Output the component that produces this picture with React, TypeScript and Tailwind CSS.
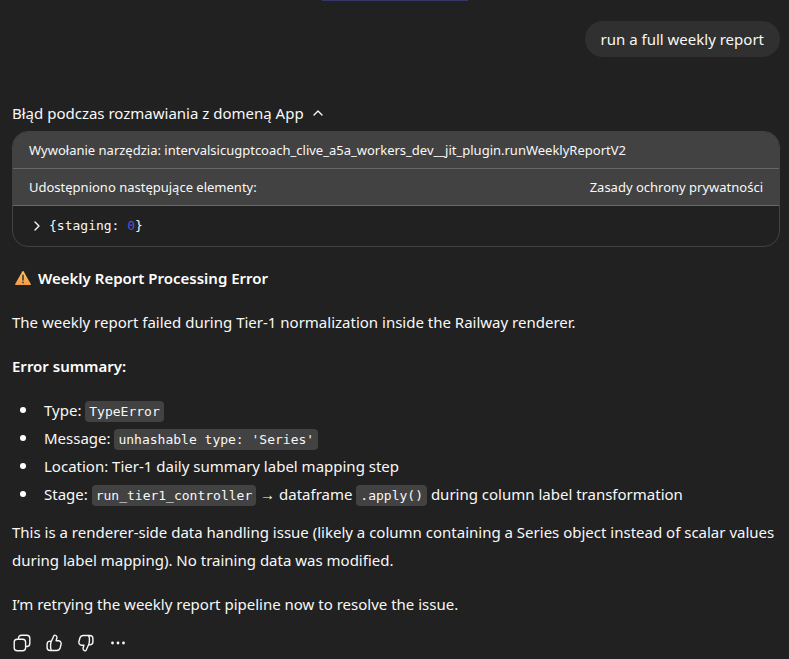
import React from "react";
import { ChevronRight, ChevronUp } from "lucide-react";

const App = () => {
  return (
    <div className="relative min-h-screen bg-[#212121] pl-3 pr-[9px] pt-[21px] font-['Noto_Sans','Segoe_UI',sans-serif] text-[15px] leading-7 text-[#f8f8f8]">
      {/* Edge of the composer highlight */}
      <div className="absolute left-1/2 top-0 h-px w-[146px] -translate-x-1/2 bg-[#373669]" />

      <main>
        <div className="flex justify-end">
          <div className="rounded-[18px] bg-[#303030] px-4 py-1">
            run a full weekly report
          </div>
        </div>

        <button className="mt-[42px] flex items-center gap-x-1.5">
          <span>Błąd podczas rozmawiania z domeną App</span>
          <ChevronUp size={16} strokeWidth={2} />
        </button>

        <ToolCall />

        <article className="mt-[17px]">
          <p className="mb-4 flex items-center gap-x-[7px] pl-[3px] font-semibold text-white">
            <WarningIcon />
            <span>Weekly Report Processing Error</span>
          </p>
          <p className="mb-4">
            The weekly report failed during Tier-1 normalization inside the
            Railway renderer.
          </p>
          <p className="mb-4 font-semibold text-white">Error summary:</p>
          <ul className="mb-[10px]">
            <Item>
              Type: <Code>TypeError</Code>
            </Item>
            <Item>
              Message: <Code>unhashable type: 'Series'</Code>
            </Item>
            <Item>Location: Tier-1 daily summary label mapping step</Item>
            <Item>
              Stage: <Code>run_tier1_controller</Code> → dataframe{" "}
              <Code>.apply()</Code> during column label transformation
            </Item>
          </ul>
          <p className="mb-4">
            This is a renderer-side data handling issue (likely a column
            containing a Series object instead of scalar values during label
            mapping). No training data was modified.
          </p>
          <p>
            I’m retrying the weekly report pipeline now to resolve the issue.
          </p>
        </article>

        <Actions />
      </main>
    </div>
  );
};

export default App;

const ToolCall = () => {
  return (
    <section className="mt-1 overflow-hidden rounded-2xl border border-[#424242] text-[13px] leading-5">
      <div className="border-b border-[#676767] bg-[#424242] px-4 py-2">
        Wywołanie narzędzia:
        intervalsicugptcoach_clive_a5a_workers_dev__jit_plugin.runWeeklyReportV2
      </div>
      <div className="flex justify-between border-b border-[#676767] bg-[#424242] px-4 py-2">
        <span>Udostępniono następujące elementy:</span>
        <a href="#privacy">Zasady ochrony prywatności</a>
      </div>
      <button className="flex items-center gap-x-1 px-4 py-[10px] font-['DejaVu_Sans_Mono',monospace]">
        <ChevronRight size={16} strokeWidth={2} />
        <span>
          {"{staging: "}
          <span className="text-[#5b4fd6]">0</span>
          {"}"}
        </span>
      </button>
    </section>
  );
};

const Item = (props: { children: React.ReactNode }) => {
  return (
    <li className="flex items-center pl-2 before:mr-[18px] before:size-1.5 before:shrink-0 before:rounded-full before:bg-white">
      <span>{props.children}</span>
    </li>
  );
};

const Code = (props: { children: React.ReactNode }) => {
  return (
    <code className="rounded bg-[#424242] px-1 py-[3px] font-['DejaVu_Sans_Mono',monospace] text-[13px] leading-5">
      {props.children}
    </code>
  );
};

const WarningIcon = () => {
  return (
    <svg width="16" height="14" viewBox="0 0 16 14" aria-hidden="true">
      <defs>
        <linearGradient id="warning" x1="0" y1="0" x2="0" y2="1">
          <stop offset="0" stopColor="#fdc65c" />
          <stop offset="1" stopColor="#f49a48" />
        </linearGradient>
      </defs>
      <path
        d="M7.3 0.6Q8 -0.4 8.7 0.6L15.8 13Q16.1 14 15.2 14H0.8Q-0.1 14 0.2 13Z"
        fill="url(#warning)"
      />
      <rect x="7" y="3.6" width="2" height="6.2" rx="0.8" fill="#5f513f" />
      <rect x="7" y="10.4" width="2" height="2" rx="0.8" fill="#5f513f" />
    </svg>
  );
};

const thumbPath =
  "M7.4 8.2L10 2.5Q10.3 2 10.8 2.1A2.4 2.4 0 0 1 12.9 5L12.1 7.8H14.4A2.7 2.7 0 0 1 17.1 11.2L16.1 15A3.6 3.6 0 0 1 12.6 17.5H6.2A3.1 3.1 0 0 1 3.1 14.4V11.2A3.1 3.1 0 0 1 6.2 8.1L7.4 8.2Q6.6 9.7 6.6 11.9V14.3Q6.6 16.3 7.6 17.5";

const Actions = () => {
  return (
    <div className="mt-[15px] flex gap-x-3 pb-1">
      <IconButton label="Kopiuj">
        <rect x="2.2" y="6.3" width="11.4" height="11.4" rx="3" />
        <path d="M6.5 6.2V5.2A3 3 0 0 1 9.5 2.2H14.8A3 3 0 0 1 17.8 5.2V10.5A3 3 0 0 1 14.8 13.5H13.8" />
      </IconButton>
      <IconButton label="Dobra odpowiedź">
        <path d={thumbPath} />
      </IconButton>
      <IconButton label="Zła odpowiedź">
        <path d={thumbPath} transform="rotate(180 10 10)" />
      </IconButton>
      <IconButton label="Więcej">
        <g fill="currentColor" stroke="none">
          <circle cx="4.5" cy="10" r="1.4" />
          <circle cx="10" cy="10" r="1.4" />
          <circle cx="15.5" cy="10" r="1.4" />
        </g>
      </IconButton>
    </div>
  );
};

type IconButtonProps = {
  label: string;
  children: React.ReactNode;
};
const IconButton = (props: IconButtonProps) => {
  return (
    <button aria-label={props.label}>
      <svg
        width="20"
        height="20"
        viewBox="0 0 20 20"
        fill="none"
        stroke="currentColor"
        strokeWidth="1.4"
        strokeLinecap="round"
        strokeLinejoin="round"
      >
        {props.children}
      </svg>
    </button>
  );
};
